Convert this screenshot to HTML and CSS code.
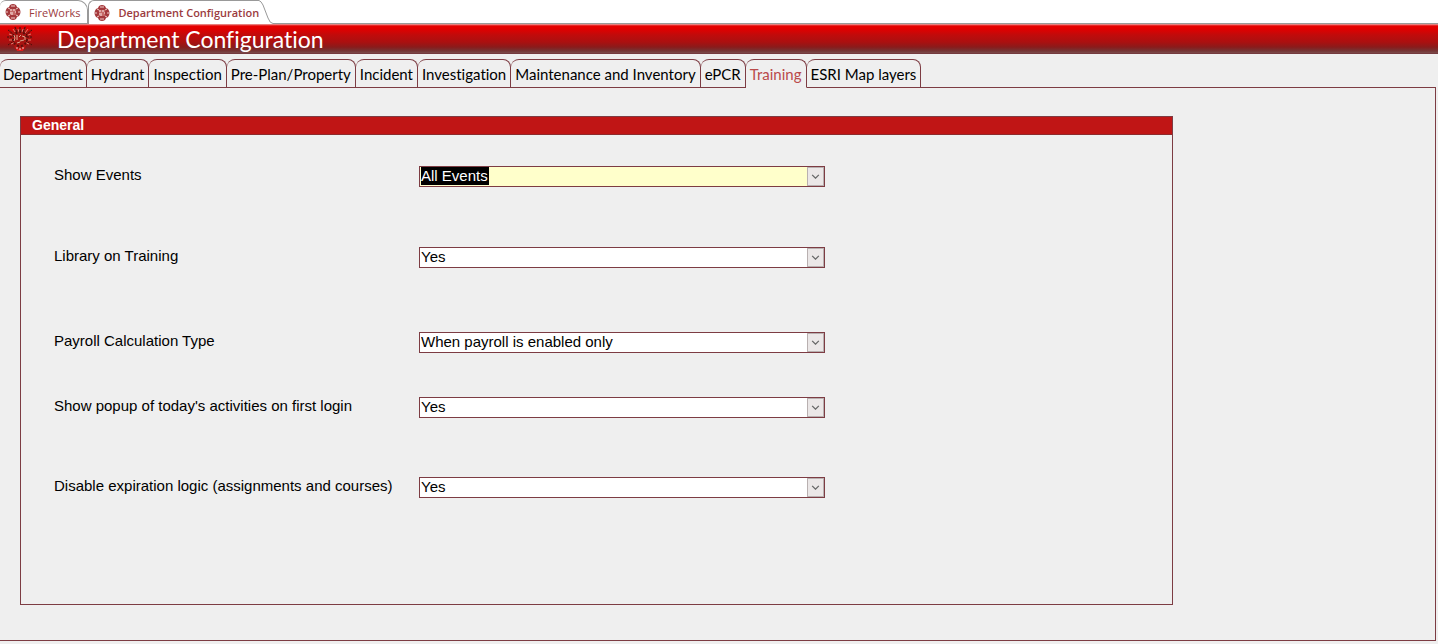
FILE: index.html
```html
<!DOCTYPE html>
<html lang="en">
<head>
  <meta charset="UTF-8">
  <meta name="viewport" content="width=device-width, initial-scale=1.0">
  <title>Department Configuration</title>
  <link rel="stylesheet" href="styles.css">
</head>
<body>
  <!-- Shared symbols -->
  <svg class="symbols" aria-hidden="true">
    <symbol id="badge" viewBox="0 0 16 16">
      <path d="M5 1Q8-1 11 1L12 3L14 4Q17 8 14 12L12 13L11 15Q8 17 5 15L4 13L2 12Q-1 8 2 4L4 3Z" fill="#a5393c"/>
      <path d="M3 4L5 5M13 4L11 5M3 12L5 11M13 12L11 11M6 2H10M6 14H10M2 7V9M14 7V9" stroke="#f0cdc9" stroke-width="1"/>
      <rect x="5" y="5" width="6" height="6" fill="#c56a68"/>
      <path d="M5 6H7M9 5V7M10 8H11M5 9H8M7 11V10" stroke="#fbe9e6" stroke-width="1" fill="none"/>
    </symbol>
    <symbol id="crest" viewBox="0 0 26 26">
      <path d="M8 0L11 4L13 1L15 4L19 0L19 6L25 3L21 9L26 12L22 14L25 19L20 18L18 23Q13 27 8 23L6 18L1 20L4 14L0 12L5 9L1 3L7 6Z" fill="#a81411"/>
      <path d="M8 1L10 7M13 1V6M18 1L16 7M1 4L7 9M25 4L19 9M0 11H6M20 11H26M1 19L7 15M25 19L19 15" stroke="#4a0c0a" stroke-width="1" stroke-dasharray="2 1"/>
      <path d="M6 3L8 6M11 3L12 6M16 3L15 6M21 3L18 7M2 8L5 9M24 8L21 9M2 14H5M21 14H24M4 18L7 17M22 18L19 17" stroke="#e07a6c" stroke-width="1"/>
      <circle cx="13" cy="13" r="7" fill="none" stroke="#5e0f0c" stroke-width="2" stroke-dasharray="2 2"/>
      <path d="M7 9L8 12L7 15M10 9V14M12 11L14 9M15 10L18 11L18 14M13 15L17 14M10 17L13 16" stroke="#dba78f" stroke-width="1" fill="none"/>
      <path d="M8 20L11 23H15L18 20L16 25H10Z" fill="#e01c1c"/>
      <path d="M9 22H11M12 23H14M15 22H17" stroke="#f3c3bd" stroke-width="1"/>
    </symbol>
    <symbol id="arrow" viewBox="0 0 10 6">
      <path d="M1 1L5 5L9 1" fill="none" stroke="#666" stroke-width="1.5"/>
    </symbol>
  </svg>

  <nav class="windows">
    <a class="window" href="#fireworks"><svg class="badge"><use href="#badge"/></svg>FireWorks</a>
    <a class="window current" href="#department-configuration"><svg class="badge"><use href="#badge"/></svg>Department Configuration</a>
    <svg class="slant" viewBox="0 0 14 24" aria-hidden="true">
      <path d="M0 0.5Q2 1 4 5L9 18Q11 23.5 14 23.5" fill="none" stroke="#999"/>
    </svg>
  </nav>

  <header class="title-bar">
    <svg class="crest"><use href="#crest"/></svg>
    <h1>Department Configuration</h1>
  </header>

  <nav class="tabs">
    <a class="tab" href="#department">Department</a>
    <a class="tab" href="#hydrant">Hydrant</a>
    <a class="tab" href="#inspection">Inspection</a>
    <a class="tab" href="#pre-plan">Pre-Plan/Property</a>
    <a class="tab" href="#incident">Incident</a>
    <a class="tab" href="#investigation">Investigation</a>
    <a class="tab" href="#maintenance">Maintenance and Inventory</a>
    <a class="tab" href="#epcr">ePCR</a>
    <a class="tab active" href="#training">Training</a>
    <a class="tab" href="#esri">ESRI Map layers</a>
    <span class="rest"></span>
  </nav>

  <main class="page">
    <section class="group">
      <h2>General</h2>
      <form class="settings">
        <label for="events">Show Events</label>
        <div class="combo focused">
          <select id="events"><option>All Events</option></select>
          <svg class="arrow"><use href="#arrow"/></svg>
        </div>
        <label for="library">Library on Training</label>
        <div class="combo">
          <select id="library"><option>Yes</option><option>No</option></select>
          <svg class="arrow"><use href="#arrow"/></svg>
        </div>
        <label for="payroll">Payroll Calculation Type</label>
        <div class="combo">
          <select id="payroll"><option>When payroll is enabled only</option></select>
          <svg class="arrow"><use href="#arrow"/></svg>
        </div>
        <label for="popup">Show popup of today's activities on first login</label>
        <div class="combo">
          <select id="popup"><option>Yes</option><option>No</option></select>
          <svg class="arrow"><use href="#arrow"/></svg>
        </div>
        <label for="expiration">Disable expiration logic (assignments and courses)</label>
        <div class="combo">
          <select id="expiration"><option>Yes</option><option>No</option></select>
          <svg class="arrow"><use href="#arrow"/></svg>
        </div>
      </form>
    </section>
  </main>
</body>
</html>
```
FILE: styles.css
```css
* {
  box-sizing: border-box;
}
body {
  margin: 0;
  background: #efefef;
  color: #000;
  font-family: "Liberation Sans", Arial, sans-serif;
  font-size: 15px;
}
a {
  color: inherit;
  text-decoration: none;
}
.symbols {
  display: none;
}

/* window tabs */
.windows {
  display: flex;
  height: 24px;
  background: #fff;
  border-bottom: 1px solid #999;
  font-family: "Open Sans", sans-serif;
  font-size: 11px;
  color: #9b3b3e;
}
.window {
  display: flex;
  align-items: center;
  gap: 8px;
  height: 24px;
  padding: 0 7px 0 5px;
  border: 1px solid #999;
  border-width: 1px 1px 1px 0;
  border-radius: 6px 10px 0 0;
}
.window.current {
  border-width: 1px 0 0 0;
  border-left: 1px solid #999;
  border-radius: 6px 0 0 0;
  padding: 0 0 0 5px;
  font-weight: 600;
  background: #fff;
}
.badge {
  width: 16px;
  height: 16px;
}
.slant {
  width: 14px;
  height: 24px;
  background: #fff;
}

/* red title bar */
.title-bar {
  display: flex;
  align-items: center;
  gap: 24px;
  height: 30px;
  padding-left: 7px;
  background: linear-gradient(#e9a9a6 0, #e60000 2px, #e00000 5px, #c00b0b 11px, #ab1010 18px, #8a1b1b 23px, #743636 27px, #7d4a4a 29px, #6b2b33 30px);
}
.crest {
  width: 26px;
  height: 26px;
}
h1 {
  margin: 0;
  font-family: Lato, sans-serif;
  font-size: 23px;
  font-weight: normal;
  font-variant-ligatures: none;
  line-height: 30px;
  color: #fff;
}

/* section tabs */
.tabs {
  display: flex;
  padding-top: 5px;
  font-family: Lato, sans-serif;
  font-size: 15px;
  font-variant-ligatures: none;
  line-height: 28px;
}
.tab {
  height: 29px;
  padding: 0 4px;
  border: 1px solid #7d3c43;
  border-left-width: 0;
  border-radius: 8px 8px 0 0;
  white-space: nowrap;
}
.tab:first-child {
  padding: 0 3px;
}
.tab.active {
  color: #b94a4a;
  border-bottom-color: #efefef;
}
.rest {
  flex: 1;
  margin-right: 2px;
  border-bottom: 1px solid #7d3c43;
}

.page {
  margin-right: 2px;
  padding: 28px 20px 35px;
  border: 1px solid #7d3c43;
  border-width: 0 1px 1px 0;
}
.group {
  max-width: 1153px;
  border: 1px solid #7d3c43;
}
h2 {
  margin: 0;
  padding-left: 11px;
  border-bottom: 1px solid #8e2a2c;
  background: #c01515;
  color: #fff;
  font-size: 14px;
  line-height: 17px;
}
.settings {
  display: grid;
  grid-template-columns: 365px minmax(200px, 406px);
  grid-template-rows: 81px 85px 65px 80px 127px;
  align-items: start;
  padding: 31px 33px 0;
}
.settings label {
  line-height: 18px;
}
.combo {
  position: relative;
}
.combo select {
  display: block;
  width: 100%;
  height: 21px;
  padding: 0 20px 2px 1px;
  border: 1px solid #7d3c43;
  border-radius: 0;
  background: #fff;
  color: #000;
  font: inherit;
  appearance: none;
  outline: none;
}
/* value of the focused field is shown as selected text */
.combo.focused select {
  background: linear-gradient(#000, #000) 1px 0 / 68px 18px no-repeat #ffffcb;
  color: #fff;
}
.combo.focused option {
  background: #fff;
  color: #000;
}
.arrow {
  position: absolute;
  top: 1px;
  right: 1px;
  width: 17px;
  height: 19px;
  padding: 6px 3px;
  border: 1px solid #b9b0b0;
  background: #ebe7e7;
  pointer-events: none;
}
```
